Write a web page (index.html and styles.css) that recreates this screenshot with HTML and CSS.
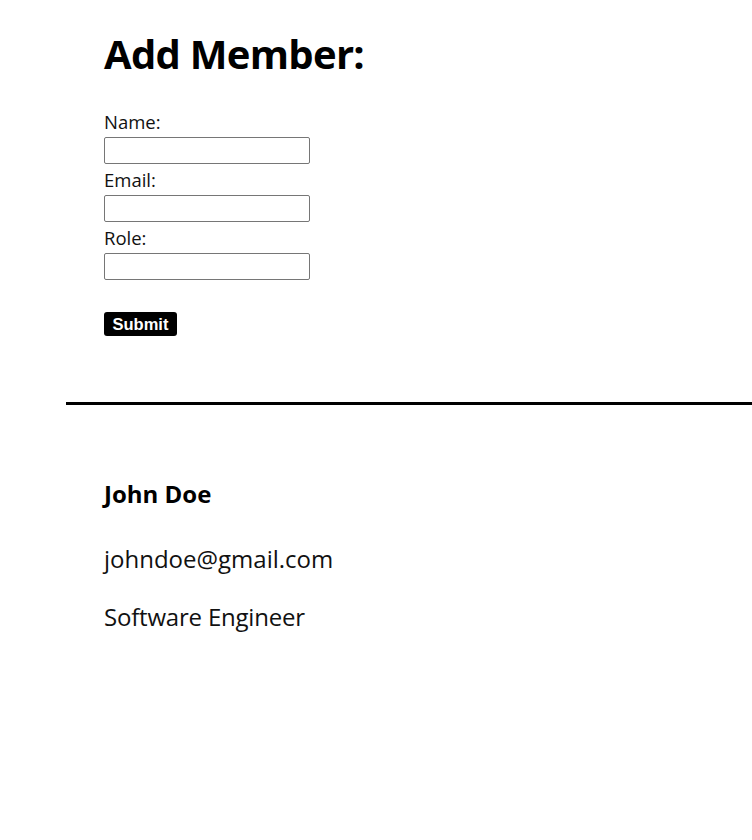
FILE: index.html
```html
<!DOCTYPE html>
<html>
<head>
<meta charset="utf-8">
<link rel="stylesheet" href="styles.css">
</head>
<body>
<div class="add-section">
  <h1 class="title">Add Member:</h1>
  <form class="member-form">
    <label class="field-label">Name:</label>
    <input class="field-input" type="text">
    <label class="field-label">Email:</label>
    <input class="field-input" type="text">
    <label class="field-label">Role:</label>
    <input class="field-input" type="text">
    <button class="submit-btn" type="button">Submit</button>
  </form>
</div>
<hr class="divider">
<div class="member-list">
  <div class="member-card">
    <h3 class="member-name">John Doe</h3>
    <p class="member-info">johndoe@gmail.com</p>
    <p class="member-info">Software Engineer</p>
  </div>
</div>
</body>
</html>
```
FILE: styles.css
```css
html, body {
  margin: 0;
  padding: 0;
  background: #fff;
  color: #000;
  font-family: "Open Sans", "Noto Sans", sans-serif;
  overflow-x: hidden;
}
.add-section {
  padding: 26px 0 0 104px;
}
.title {
  margin: 0 0 28px 0;
  font-size: 40px;
  line-height: 56px;
  font-weight: 700;
  letter-spacing: -0.7px;
}
.member-form {
  display: flex;
  flex-direction: column;
  align-items: flex-start;
}
.field-label {
  font-size: 18.5px;
  line-height: 24px;
  margin-bottom: 3px;
  color: #111;
}
.field-input {
  box-sizing: border-box;
  width: 206px;
  height: 27px;
  margin: 0 0 4px 0;
  border: 1px solid #767676;
  border-radius: 2px;
  padding: 0 4px;
}
.submit-btn {
  margin-top: 28px;
  box-sizing: border-box;
  width: 73px;
  height: 24px;
  background: #000;
  color: #fff;
  border: none;
  border-radius: 3px;
  font-family: "Liberation Sans", Arial, sans-serif;
  font-weight: 700;
  font-size: 16.5px;
  line-height: 24px;
  padding: 0 0 2px 0;
}
.divider {
  margin: 66px 0 0 66px;
  width: 700px;
  height: 3px;
  border: none;
  background: #000;
}
.member-list {
  padding: 74px 0 0 104px;
}
.member-name {
  margin: 0;
  font-size: 24px;
  line-height: 30px;
  font-weight: 700;
}
.member-info {
  margin: 35px 0 0 0;
  font-size: 24px;
  line-height: 30px;
  color: #111;
}
.member-info + .member-info {
  margin-top: 28px;
  letter-spacing: -0.2px;
}
```
